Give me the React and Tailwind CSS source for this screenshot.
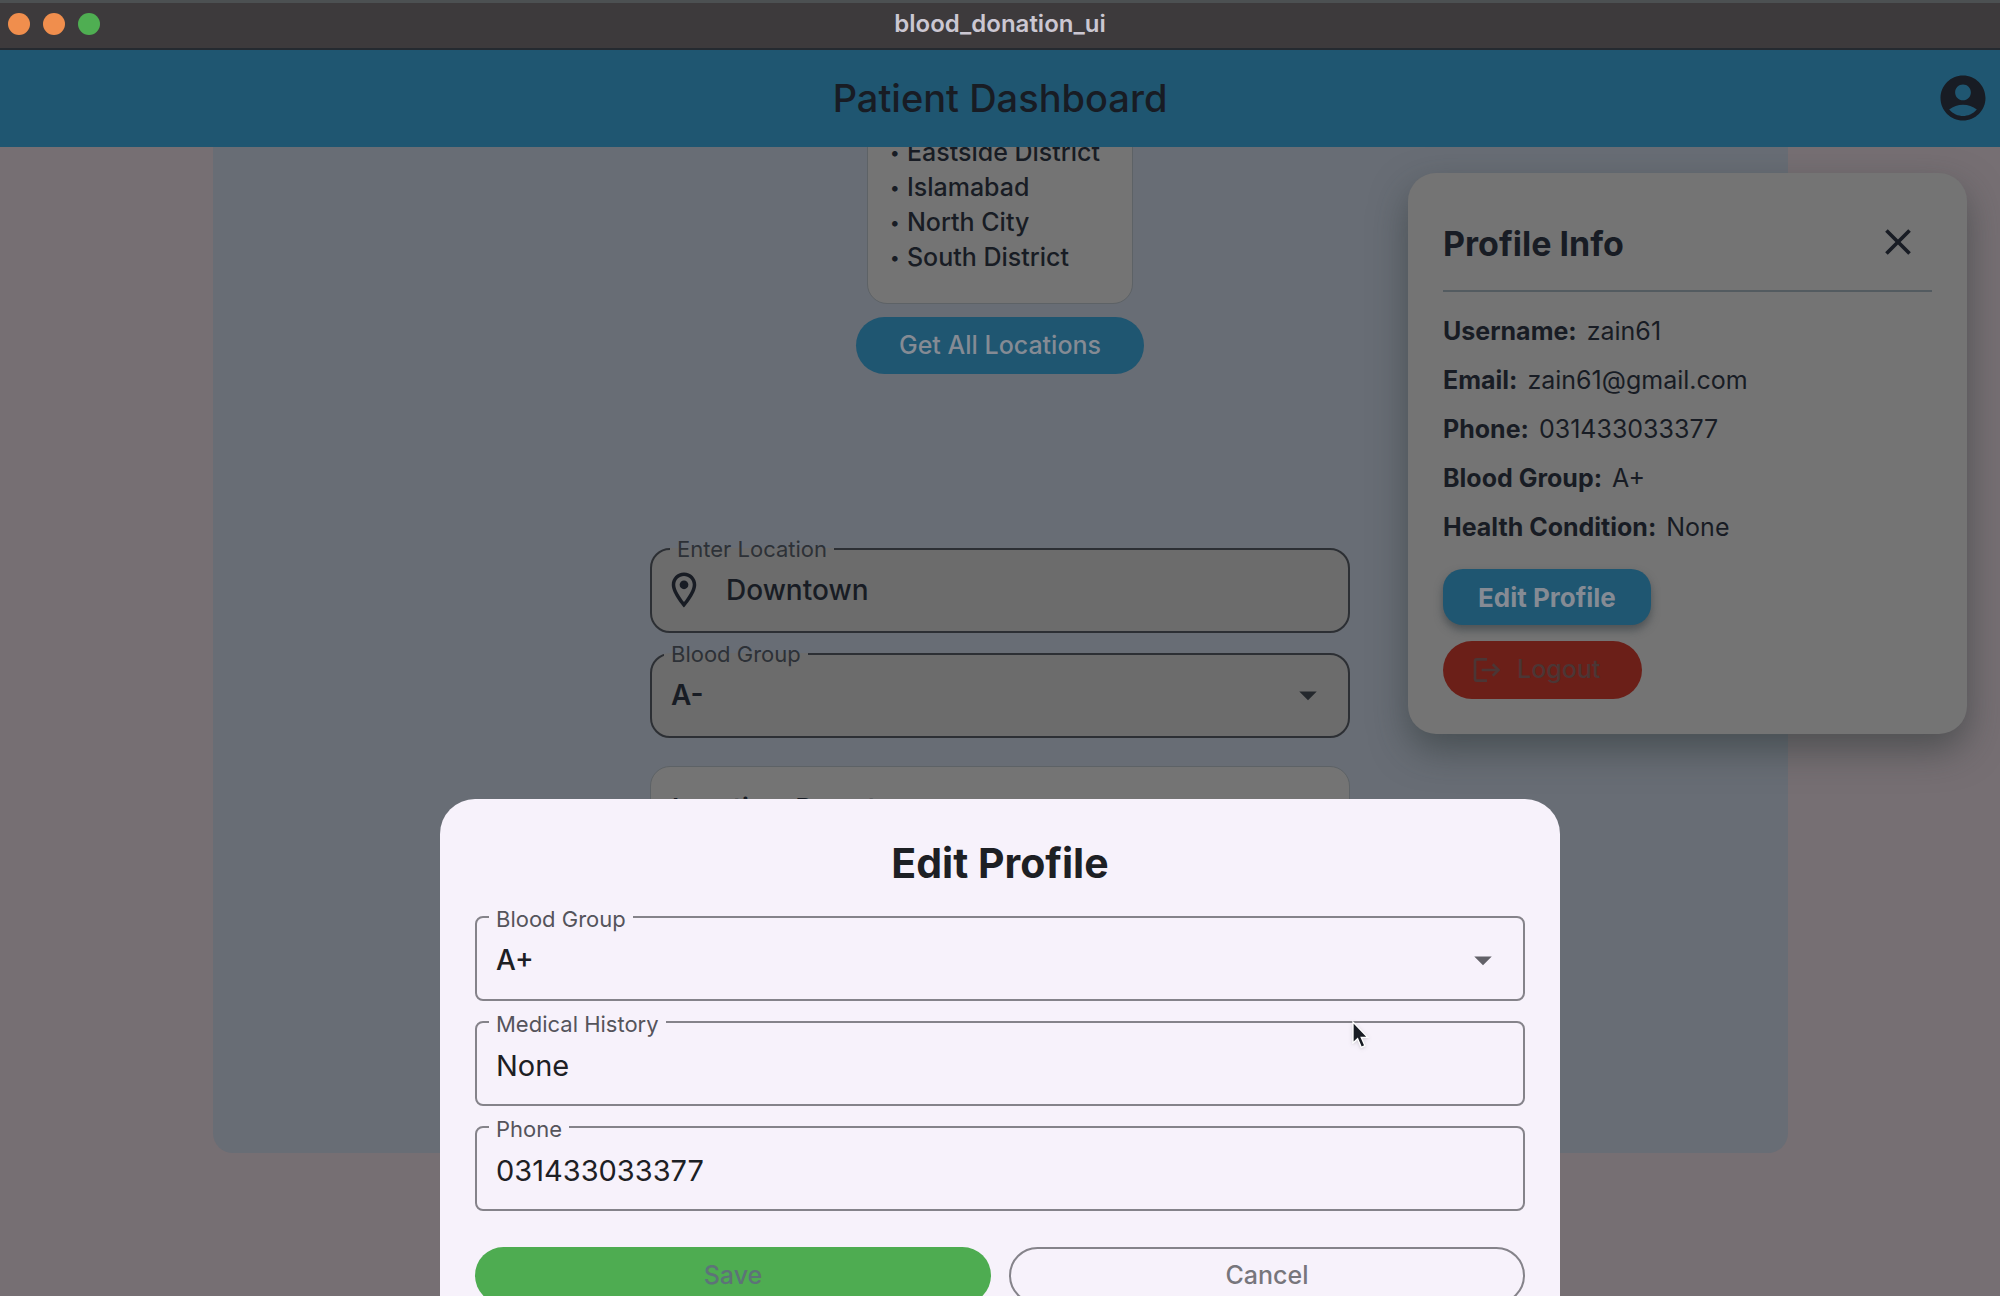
import { MdAccountCircle, MdArrowDropDown, MdClose, MdLogout, MdOutlineLocationOn } from 'react-icons/md';

const locations = ['Eastside District', 'Islamabad', 'North City', 'South District'];

const profile = [
  ['Username', 'zain61'],
  ['Email', 'zain61@gmail.com'],
  ['Phone', '031433033377'],
  ['Blood Group', 'A+'],
  ['Health Condition', 'None'],
];

const bloodGroups = ['A+', 'A-', 'B+', 'B-', 'AB+', 'AB-', 'O+', 'O-'];

function TitleBar() {
  return (
    <div className="flex h-[50px] items-center border-t-[3px] border-b-2 border-t-[#4c5052] border-b-[#252a30] bg-[#3d3a3c] px-2 pb-1">
      <div className="flex flex-1 gap-[13px]">
        <span className="h-[22px] w-[22px] rounded-full bg-[#f08e4d]"/>
        <span className="h-[22px] w-[22px] rounded-full bg-[#f08e4d]"/>
        <span className="h-[22px] w-[22px] rounded-full bg-[#4fae52]"/>
      </div>
      <span className="text-2xl leading-6 font-semibold text-[#cbc7d2]">blood_donation_ui</span>
      <div className="flex-1"/>
    </div>
  );
}

function Header() {
  return (
    <header className="relative z-10 flex h-[97px] items-center bg-[#1f5671] px-[10px] pb-px">
      <div className="flex-1"/>
      <h1 className="text-[38px] font-medium text-[#181c24]">Patient Dashboard</h1>
      <div className="flex flex-1 justify-end">
        <button type="button" aria-label="Account" className="text-[#181c24]">
          <MdAccountCircle size={54}/>
        </button>
      </div>
    </header>
  );
}

// Outlined field: the legend cuts the notch in the border
function Field({ id, label, dark, inset, children }) {
  const box = dark
    ? 'rounded-[20px] border-[#2c2f34] bg-[#6c6c6c]'
    : 'rounded-[8px] border-[#85838a] pt-[2px]';
  const text = dark ? 'leading-6 text-[#2d3137]' : 'leading-7 text-[#55545b]';
  return (
    <fieldset className={`h-24 w-full min-w-0 border-2 ${box}`}>
      <legend className={`h-6 px-[7px] text-[22px] ${inset ? 'ml-[18px]' : 'ml-3'} ${text}`}>
        <label htmlFor={id}>{label}</label>
      </legend>
      {children}
    </fieldset>
  );
}

function BloodSelect({ id, value, className, arrow }) {
  return (
    <div className="relative">
      <select id={id} defaultValue={value}
        className={`h-[58px] w-full appearance-none bg-transparent px-[19px] text-[28px] outline-none ${className}`}>
        {bloodGroups.map(g => <option key={g}>{g}</option>)}
      </select>
      <MdArrowDropDown size={42} className={`pointer-events-none absolute top-2 right-[19px] ${arrow}`}/>
    </div>
  );
}

function Dashboard() {
  return (
    <main className="mx-auto flex w-full max-w-[1575px] flex-col items-center overflow-hidden rounded-b-[20px] bg-[#686d75] text-[#181c24]">
      <ul className="-mt-[13px] rounded-b-[20px] border border-[#5d6266] bg-[#747474] pr-8 pb-7 pl-[22px] text-[25px] leading-[35px] font-medium">
        {locations.map(l => (
          <li key={l} className="flex">
            <span className="w-[17px] text-lg leading-[35px]">•</span>
            {l}
          </li>
        ))}
      </ul>
      <button type="button"
        className="mt-[13px] h-[57px] rounded-full bg-[#1f5671] px-[43px] text-[25px] font-medium text-[#858b94]">
        Get All Locations
      </button>
      <div className="mt-[163px] mb-[70px] flex w-[700px] flex-col gap-[9px]">
        <Field id="location" label="Enter Location" dark inset>
          <div className="flex items-center pl-[11px]">
            <MdOutlineLocationOn size={42} className="shrink-0"/>
            <input id="location" defaultValue="Downtown"
              className="h-[58px] min-w-0 flex-1 bg-transparent pl-[21px] text-[28px] font-medium outline-none"/>
          </div>
        </Field>
        <Field id="needed-group" label="Blood Group" dark>
          <BloodSelect id="needed-group" value="A-" className="font-semibold" arrow="text-[#24282d]"/>
        </Field>
        <section className="mt-[19px] min-h-[317px] rounded-[20px] border border-[#5d6266] bg-[#747474] px-[21px] pt-[23px] text-[26px] leading-[35px] font-semibold">
          <p>Location: Downtown</p>
        </section>
      </div>
    </main>
  );
}

function ProfileCard() {
  return (
    <aside className="absolute top-[173px] right-[33px] w-[559px] rounded-[28px] bg-[#747474] p-[35px] text-[#181c24] shadow-[0_16px_36px_rgba(40,50,50,0.5)]">
      <div className="flex h-[68px] items-center justify-between">
        <h2 className="pt-1 text-[34px] leading-10 font-bold">Profile Info</h2>
        <button type="button" aria-label="Close" className="flex h-[68px] w-[68px] items-center justify-center">
          <MdClose size={44}/>
        </button>
      </div>
      <hr className="mt-[14px] mb-[15px] border-t-2 border-[#535b60]"/>
      <dl className="text-[25px] leading-[49px]">
        {profile.map(([name, value]) => (
          <div key={name} className="flex gap-[10px]">
            <dt className="font-bold">{name}:</dt>
            <dd>{value}</dd>
          </div>
        ))}
      </dl>
      <div className="mt-[17px] flex flex-col items-start gap-4">
        <button type="button"
          className="h-14 rounded-[20px] bg-[#1f5671] px-[35px] text-[26px] font-bold text-[#858b94] shadow-[0_5px_8px_rgba(50,60,65,0.6)]">
          Edit Profile
        </button>
        <button type="button"
          className="flex h-[58px] items-center gap-[14px] rounded-full bg-[#6b1f18] pr-[42px] pl-[28px] text-[25px] font-medium text-[#4b3635]">
          <MdLogout size={32}/>
          Logout
        </button>
      </div>
    </aside>
  );
}

function EditProfileSheet() {
  return (
    <div className="fixed inset-0 z-20 flex items-end justify-center overflow-hidden">
      <form className="relative -mb-11 w-[1120px] rounded-[35px] bg-[#f7f2fb] px-[35px] pt-10 pb-9 text-[#1d2024]"
        onSubmit={e => e.preventDefault()}>
        <h2 className="text-center text-[41px] leading-[48px] font-bold">Edit Profile</h2>
        <div className="mt-[18px] flex flex-col gap-[9px]">
          <Field id="group" label="Blood Group">
            <BloodSelect id="group" value="A+" className="font-medium" arrow="text-[#626168]"/>
          </Field>
          <Field id="history" label="Medical History">
            <input id="history" defaultValue="None"
              className="h-[58px] w-full bg-transparent px-[19px] text-[29px] outline-none"/>
          </Field>
          <Field id="phone" label="Phone">
            <input id="phone" type="tel" defaultValue="031433033377"
              className="h-[58px] w-full bg-transparent px-[19px] text-[29px] outline-none"/>
          </Field>
        </div>
        <div className="mt-9 grid grid-cols-2 gap-[18px]">
          <button type="submit" className="h-[57px] rounded-full bg-[#4eac51] text-[25px] font-medium text-[#5d7378]">
            Save
          </button>
          <button type="button" className="h-[57px] rounded-full border-2 border-[#85838a] text-[25px] font-medium text-[#77767c]">
            Cancel
          </button>
        </div>
        <svg className="pointer-events-none absolute top-[221px] right-[191px] drop-shadow" width="18" height="30" viewBox="0 0 18 30">
          <path d="M2 2v21l4.600-4.300 3.700 8.600 3.600-1.600-3.700-8.400h6.400z" fill="#181c24" stroke="#fff" strokeWidth="1.300"/>
        </svg>
      </form>
    </div>
  );
}

export default function App() {
  return (
    <div className="relative min-h-screen overflow-hidden bg-[#766f73]" style={{ fontFamily: 'Inter, sans-serif' }}>
      <TitleBar/>
      <Header/>
      <Dashboard/>
      <ProfileCard/>
      <EditProfileSheet/>
    </div>
  );
}
